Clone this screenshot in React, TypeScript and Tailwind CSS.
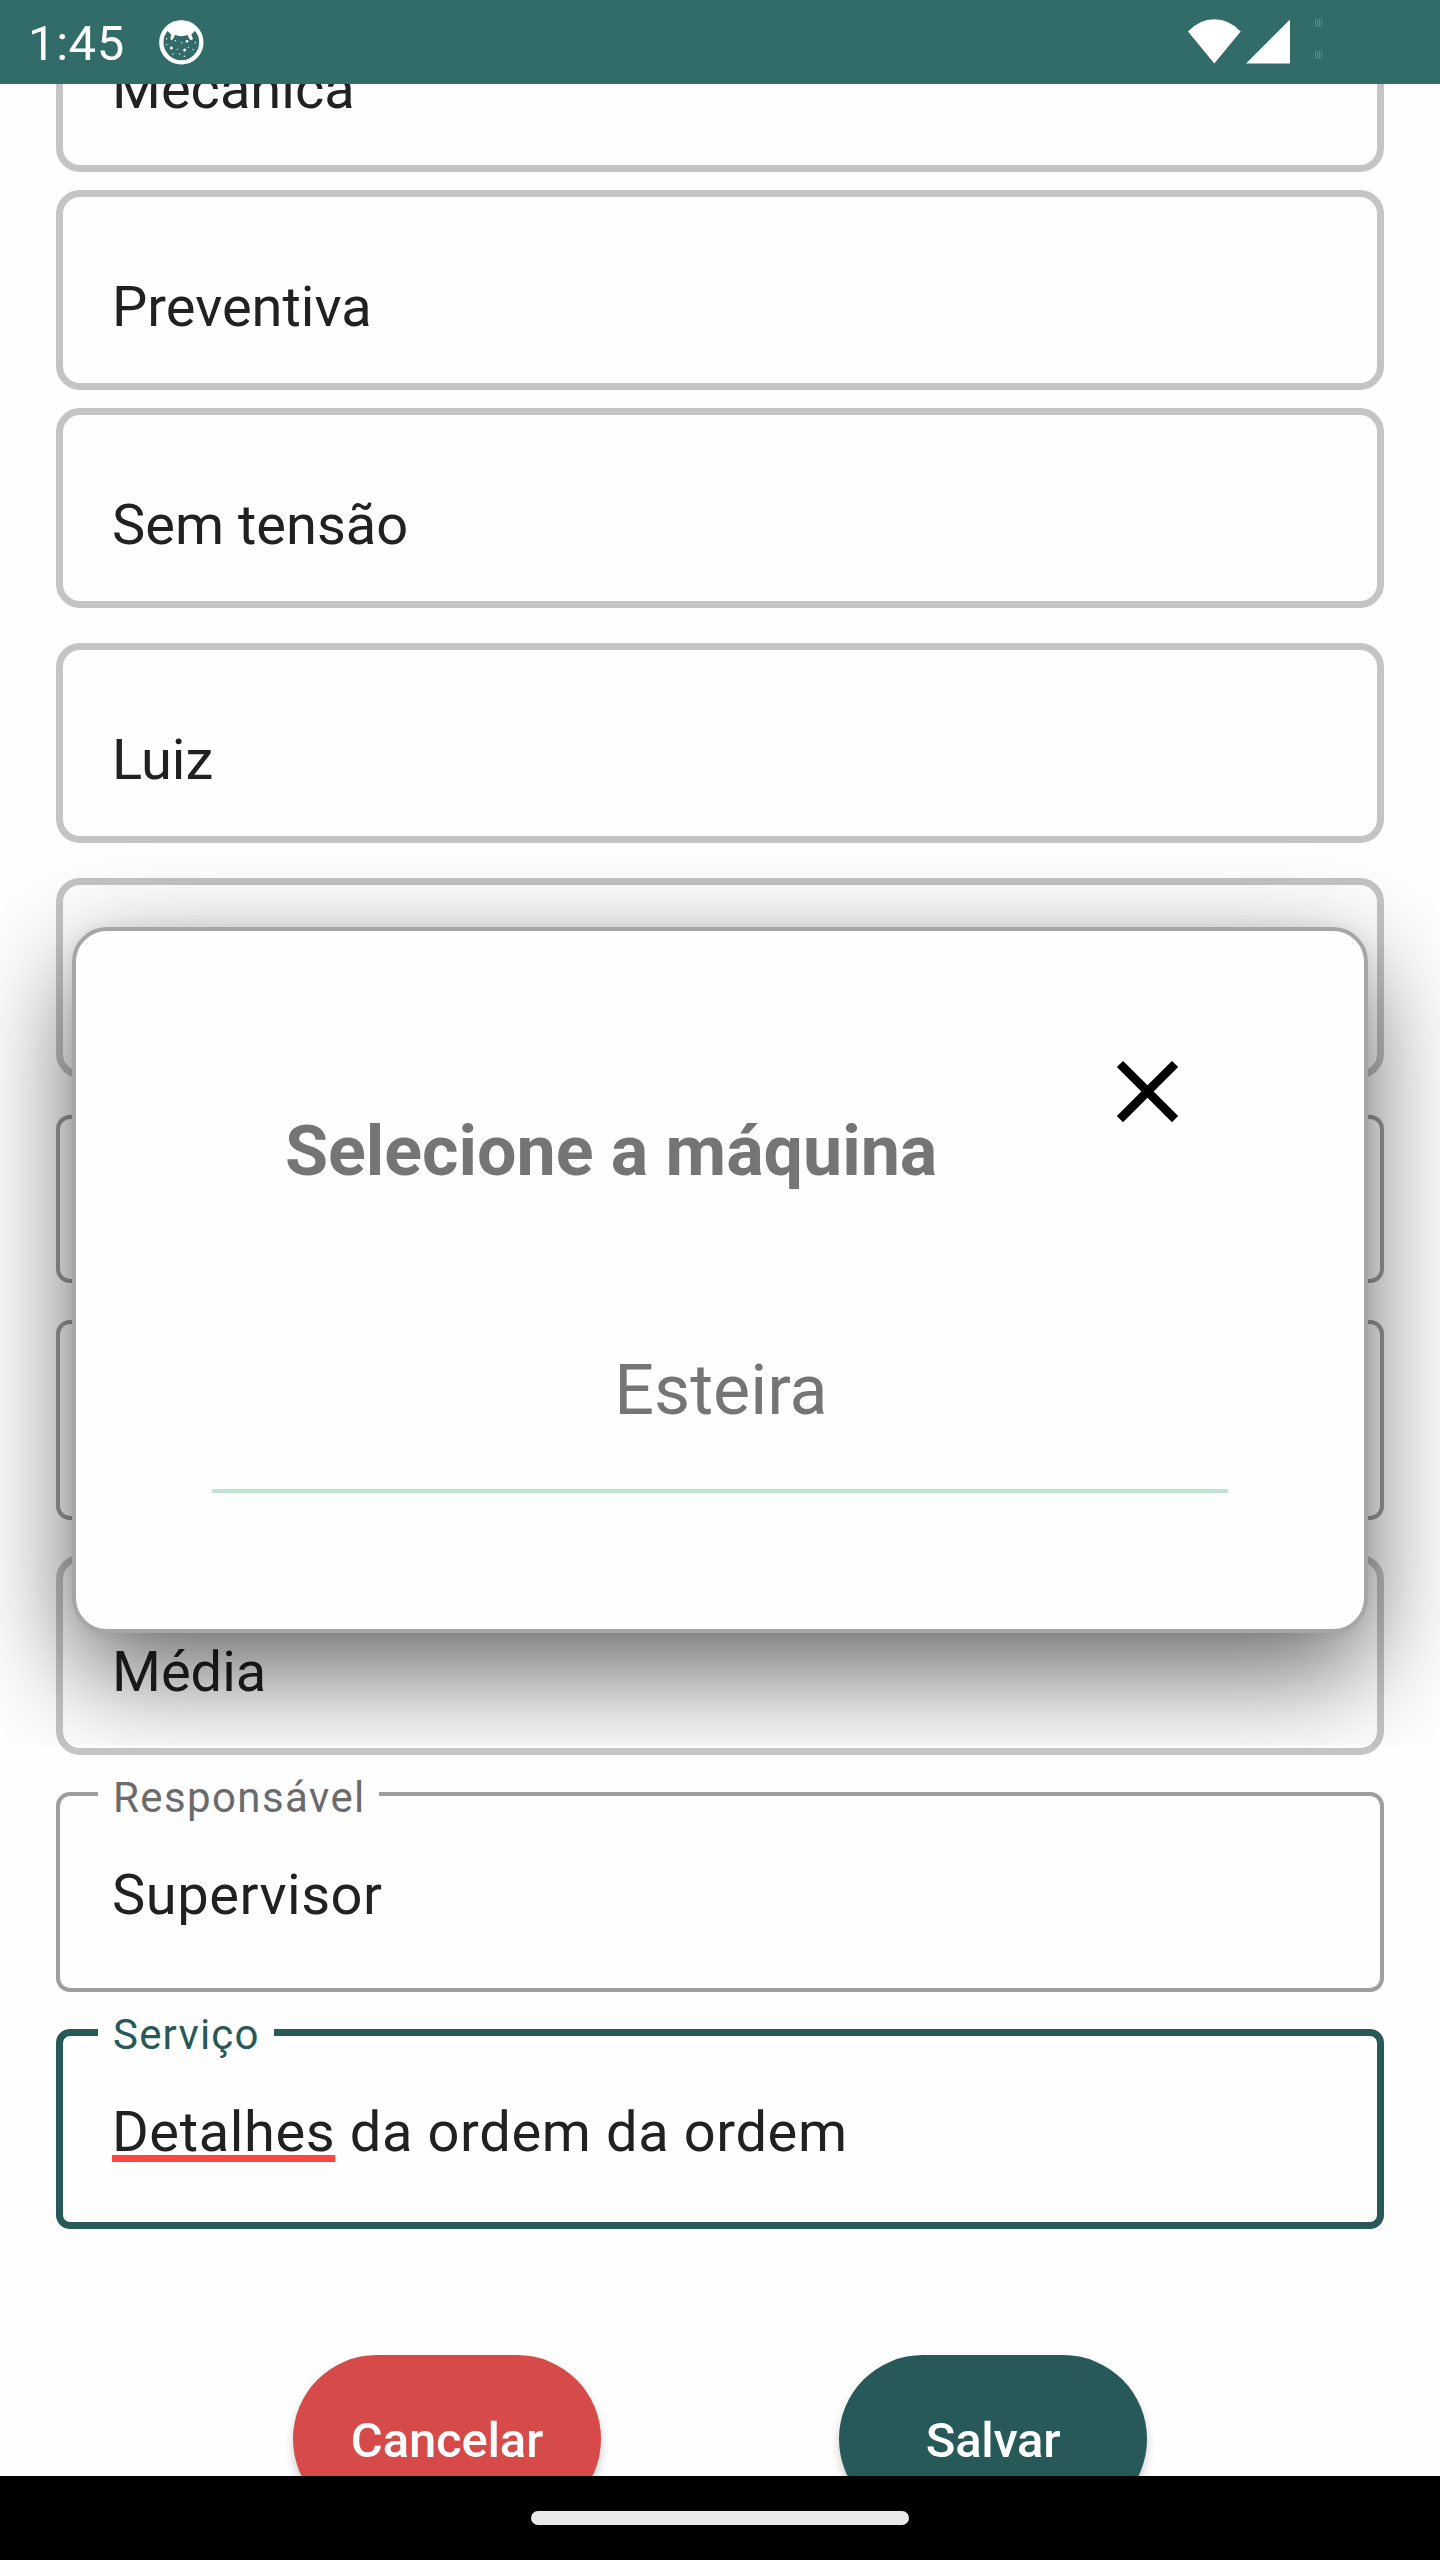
import type { ReactNode } from "react";

function DebuggerIcon() {
  return (
    <svg className="h-[47px] w-[47px]" viewBox="474 57 141 141" fill="none">
      <circle cx="544" cy="127" r="60" stroke="#fff" strokeWidth="13" />
      <path
        d="M496 84 C510 66 528 62 544 62 C560 62 578 66 592 84 L583 95 L574 103 L579 117 L573 121 L568 117 L563 105 Q544 112 525 105 L519 118 L513 121 L511 114 L514 104 L505 95 Z"
        fill="#fff"
      />
      <g fill="#fff">
        <circle cx="514" cy="144" r="4.5" />
        <circle cx="554" cy="150" r="4.5" />
        <circle cx="561" cy="124" r="4" />
        <circle cx="545" cy="128" r="2" />
        <circle cx="526" cy="122" r="2" />
        <circle cx="500" cy="134" r="2" />
        <circle cx="500" cy="117" r="2" />
        <circle cx="586" cy="128" r="2" />
        <circle cx="565" cy="142" r="2" />
        <circle cx="579" cy="149" r="2" />
        <circle cx="532" cy="148" r="2" />
        <circle cx="519" cy="162" r="2.2" />
        <circle cx="539" cy="162" r="2.2" />
        <circle cx="553" cy="169" r="2.2" />
      </g>
    </svg>
  );
}

function WifiIcon() {
  return (
    <svg className="h-[46px] w-[53px]" viewBox="0 0 53 46">
      <path d="M26.3 44.4 L0 12.4 Q11.5 0.2 26.3 0.2 Q41.2 0.2 52.7 12.4 Z" fill="#fff" />
    </svg>
  );
}

function SignalIcon() {
  return (
    <svg className="h-[46px] w-[44px]" viewBox="0 0 44 46">
      <path d="M0 44.6 L44 0.6 V44.6 Z" fill="#fff" />
    </svg>
  );
}

function BatteryIcon() {
  return (
    <svg className="h-[46px] w-[7px]" viewBox="0 0 7 46" fill="#fff" fillOpacity="0.22" shapeRendering="crispEdges">
      {[0, 2, 4, 6].map((x) => (
        <g key={x}>
          <rect x={x} y="0" width="1" height="8" />
          <rect x={x} y="32" width="1" height="8" />
        </g>
      ))}
    </svg>
  );
}

function StatusBar() {
  return (
    <header className="flex h-[84px] shrink-0 items-start justify-between bg-[#316c69] pr-[118px] pl-[28px]">
      <div className="flex items-start">
        <span className="mt-[15px] w-[130px] text-[49px] leading-[57px] tracking-[0.6px] text-white">1:45</span>
        <div className="mt-[19px]">
          <DebuggerIcon />
        </div>
      </div>
      <div className="mt-[19px] flex items-start">
        <WifiIcon />
        <div className="ml-[5px]">
          <SignalIcon />
        </div>
        <div className="ml-[25px]">
          <BatteryIcon />
        </div>
      </div>
    </header>
  );
}

function SelectField({ value }: { value?: string }) {
  return (
    <div className="h-[200px] shrink-0 rounded-[24px] border-7 border-[#c4c4c4] pt-[77px] pl-[49px] text-[56px] leading-[66px] text-[#212121]">
      {value}
    </div>
  );
}

function OutlinedField({ className }: { className: string }) {
  return <div className={`shrink-0 rounded-[14px] border-4 border-[#9e9e9e] ${className}`} />;
}

function LabeledField({
  label,
  className,
  labelClassName,
  children,
}: {
  label: string;
  className: string;
  labelClassName: string;
  children: ReactNode;
}) {
  return (
    <div className={`relative h-[200px] shrink-0 rounded-[14px] text-[56px] leading-[66px] text-[#212121] ${className}`}>
      <span className={`absolute bg-[#fefefe] pl-[15px] text-[42px] leading-[49px] ${labelClassName}`}>{label}</span>
      {children}
    </div>
  );
}

function PillButton({ label, className }: { label: string; className: string }) {
  return (
    <button
      className={`h-[168px] w-[308px] rounded-full pt-[3px] text-[49px] leading-[57px] font-medium text-white shadow-[0_6px_10px_rgba(0,0,0,0.2)] ${className}`}
    >
      {label}
    </button>
  );
}

function MachineDialog() {
  return (
    <div className="absolute inset-x-0 top-0 h-[1745px] overflow-hidden">
      <section className="absolute inset-x-[72px] top-[927px] flex h-[706px] flex-col rounded-[35px] border-4 border-[#a6a6a6] bg-[#fefefe] text-[70px] leading-[82px] text-[#757575] shadow-[0_40px_106px_rgba(0,0,0,0.59),0_0_16px_rgba(0,0,0,0.07)]">
        <div className="flex items-start justify-between pr-[164px] pl-[209px]">
          <h2 className="mt-[179px] font-bold tracking-[-0.04px]">Selecione a máquina</h2>
          <button className="mt-[108px]">
            <svg className="h-[105px] w-[105px]" viewBox="0 0 24 24" fill="#000">
              <path d="M19 6.41 17.59 5 12 10.59 6.41 5 5 6.41 10.59 12 5 17.59 6.41 19 12 13.41 17.59 19 19 17.59 13.41 12z" />
            </svg>
          </button>
        </div>
        <div className="mx-[136px] mt-[157px] h-[144px] border-b-4 border-[#bde5d0] pl-[2px] text-center">Esteira</div>
      </section>
    </div>
  );
}

export default function App() {
  return (
    <div className="relative flex h-[2560px] w-[1440px] flex-col overflow-hidden bg-[#fefefe] font-[Roboto,sans-serif]">
      <StatusBar />
      <main className="flex-1 overflow-hidden">
        <div className="-mt-[112px] flex flex-col px-14">
          <SelectField value="Mecânica" />
          <div className="mt-[18px] flex flex-col gap-[18px]">
            <SelectField value="Preventiva" />
            <SelectField value="Sem tensão" />
          </div>
          <div className="mt-[35px] flex flex-col gap-[35px]">
            <SelectField value="Luiz" />
            <SelectField />
          </div>
          <div className="my-[37px] flex flex-col gap-[37px]">
            <OutlinedField className="h-[168px]" />
            <OutlinedField className="h-[200px]" />
          </div>
          <div className="-mt-[2px] flex flex-col gap-[37px]">
            <SelectField value="Média" />
            <LabeledField
              label="Responsável"
              className="border-4 border-[#9e9e9e] pt-[66px] pl-[52px] tracking-[0.53px]"
              labelClassName="-top-[23px] left-[38px] w-[281px] tracking-[1.4px] text-[#6b6b6b]"
            >
              Supervisor
            </LabeledField>
            <LabeledField
              label="Serviço"
              className="border-7 border-[#265957] pt-[63px] pl-[49px] tracking-[0.62px]"
              labelClassName="-top-[26px] left-[35px] w-[176px] tracking-[1.2px] text-[#265957]"
            >
              <span className="underline decoration-[#ff4444] decoration-7 underline-offset-4 [text-decoration-skip-ink:none]">
                Detalhes
              </span>{" "}
              da ordem da ordem
            </LabeledField>
          </div>
          <div className="mt-[126px] flex gap-[238px] pl-[237px]">
            <PillButton label="Cancelar" className="bg-[#d64a49] tracking-[-0.18px]" />
            <PillButton label="Salvar" className="bg-[#265957] tracking-[-0.3px]" />
          </div>
        </div>
      </main>
      <nav className="flex h-[84px] shrink-0 items-center justify-center bg-black">
        <div className="h-[14px] w-[378px] rounded-full bg-[#e9e9e9]" />
      </nav>
      <MachineDialog />
    </div>
  );
}
